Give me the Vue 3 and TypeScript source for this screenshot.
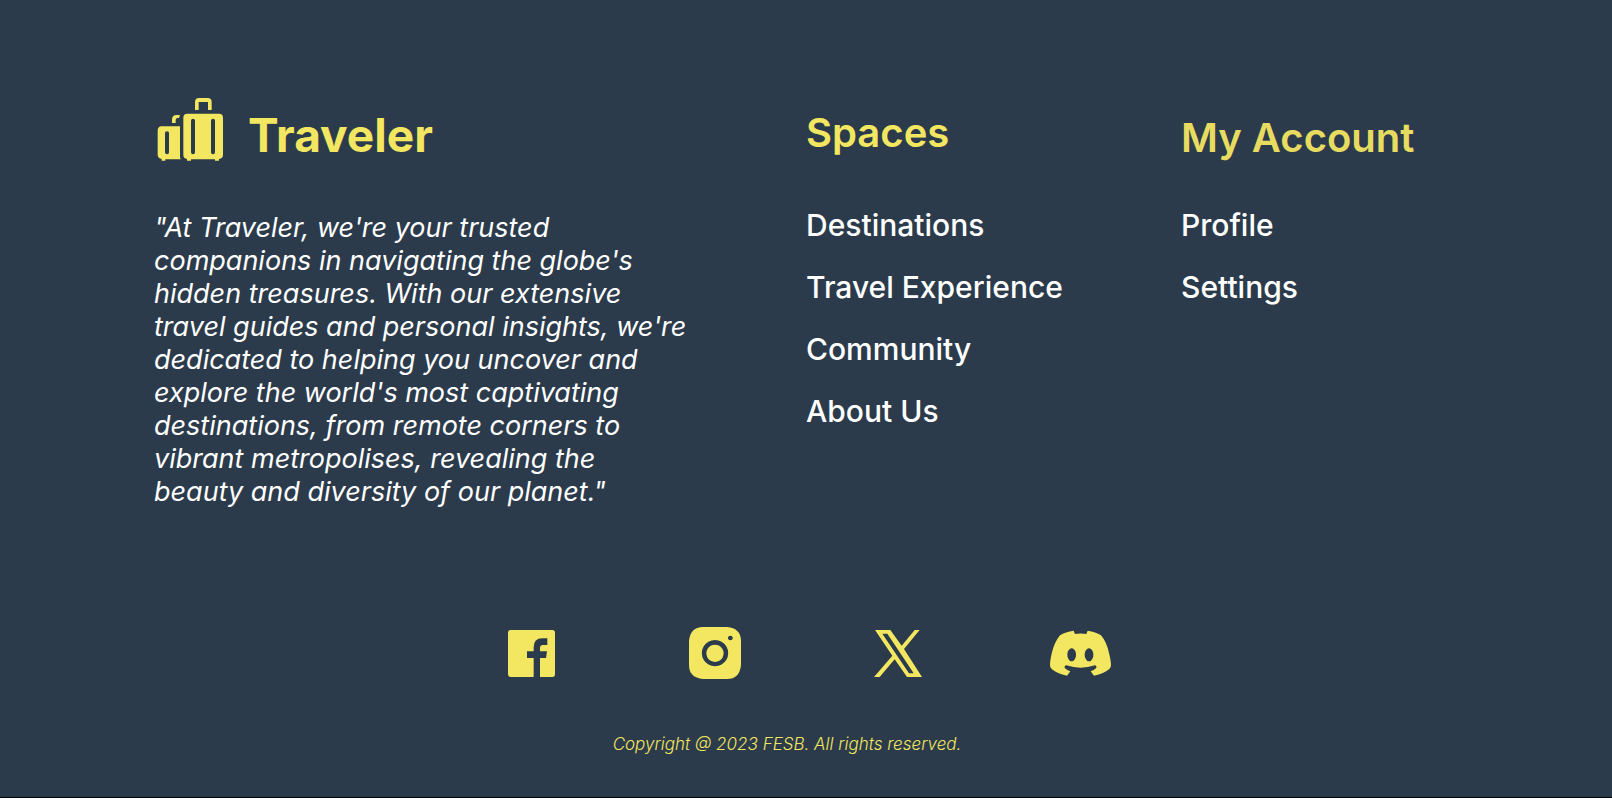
<script setup lang="ts">
interface Column {
  id: string
  title: string
  links: string[]
}

const columns: Column[] = [
  { id: 'spaces', title: 'Spaces', links: ['Destinations', 'Travel Experience', 'Community', 'About Us'] },
  { id: 'account', title: 'My Account', links: ['Profile', 'Settings'] },
]
</script>

<template>
  <footer class="footer">
    <div class="top">
      <section class="about">
        <a class="brand" href="#">
          <svg class="logo" viewBox="42 51 210 195" aria-hidden="true">
            <path d="M165 90V66q0-12 12-12h26q12 0 12 12v24h-11V66h-28v24z" />
            <path d="M96 129v-10q0-14 14-14h10l-3 9h-4q-6 0-6 6v9z" />
            <path
              fill-rule="evenodd"
              d="M63 139h57v93l2 6h-46v4H65v-5q-12-3-12-13v-72q0-11 10-13zM75 159v58q0 6 6 6t6-6v-58q0-5-6-5t-6 5z"
            />
            <path
              fill-rule="evenodd"
              d="M142 101h95q12 0 12 12v112q0 10-12 12v5h-12v-4h-72v4h-12v-5q-11-2-11-12V113q0-12 12-12zM153 122v95q0 6 6 6t6-6v-95q0-6-6-6t-6 6zM213 122v95q0 6 6 6t6-6v-95q0-6-6-6t-6 6z"
            />
          </svg>
          <span class="name">Traveler</span>
        </a>
        <p class="quote">
          "At Traveler, we're your trusted companions in navigating the globe's hidden treasures. With our
          extensive travel guides and personal insights, we're dedicated to helping you uncover and explore the
          world's most captivating destinations, from remote corners to vibrant metropolises, revealing the
          beauty and diversity of our planet."
        </p>
      </section>
      <nav v-for="column in columns" :key="column.id" :class="['column', column.id]" :aria-labelledby="column.id">
        <h2 :id="column.id" class="heading">{{ column.title }}</h2>
        <ul class="links">
          <li v-for="link in column.links" :key="link"><a href="#">{{ link }}</a></li>
        </ul>
      </nav>
    </div>

    <div class="social">
      <a href="#" aria-label="Facebook">
        <svg width="47" height="47" viewBox="0 0 141 141">
          <path
            d="M8 0h125q8 0 8 8v125q0 8-8 8H96V84h18l3-20H96V54q0-9 9-9h13V25h-15q-26 0-26 27v12H57v20h20v57H8q-8 0-8-8V8q0-8 8-8z"
          />
        </svg>
      </a>
      <a href="#" aria-label="Instagram">
        <svg width="52" height="52" viewBox="0 0 156 156">
          <path
            fill-rule="evenodd"
            d="M42 0h72q42 4 42 42v72q-4 42-42 42H42Q0 152 0 114V42Q4 0 42 0zM78 39a39.500 39.500 0 1 0 .1 0zM78 53a26 26 0 1 1-.1 0zM124 26a7 7 0 1 0 .1 0z"
          />
        </svg>
      </a>
      <a href="#" aria-label="X">
        <svg width="48" height="47" viewBox="0 0 144 141">
          <path
            fill-rule="evenodd"
            d="M3 0h46l34 47L122 0h15L90 57l54 84H99L62 88 17 141H0l55-64zM25 11l80 119h14L40 11z"
          />
        </svg>
      </a>
      <a href="#" aria-label="Discord">
        <svg width="61" height="46" viewBox="0 0 183 138">
          <path
            fill-rule="evenodd"
            d="M71 2L75 12Q92 9 109 12L113 2Q137 5 153 16Q170 36 177 69Q183 93 183 106Q183 113 178 117Q162 131 132 137L122 124Q132 121 138 115Q142 108 135 106Q92 120 49 106Q41 108 45 115Q51 121 61 124L51 137Q21 131 5 117Q0 113 0 106Q0 91 6 67Q13 37 30 16Q46 5 71 2zM65 55a13 19.500 0 1 0 .1 0zM117 55a13 19.500 0 1 0 .1 0z"
          />
        </svg>
      </a>
    </div>

    <p class="copyright">Copyright @ 2023 FESB. All rights reserved.</p>
  </footer>
</template>

<style>
body {
  margin: 0;
  background: #2b3b4b;
}
</style>

<style scoped>
.footer {
  box-sizing: border-box;
  display: flex;
  flex-direction: column;
  min-height: 100vh;
  padding: 95px 154px 40px;
  border-bottom: 1px solid #000;
  background: #2b3b4b;
  color: #fff;
  font-family: Inter, "Liberation Sans", sans-serif;
}

a {
  color: inherit;
  text-decoration: none;
}

.top {
  display: grid;
  grid-template-columns: 652fr 375fr 277fr;
}

.brand {
  display: flex;
  align-items: center;
  gap: 24px;
  color: #f3e660;
}

.logo {
  width: 70px;
  height: 65px;
  fill: currentColor;
}

.name {
  padding-top: 12px;
  font-size: 46px;
  font-weight: 700;
  line-height: 56px;
}

.quote {
  max-width: 536px;
  margin: 48px 0 0;
  font-size: 27px;
  font-style: italic;
  font-weight: 400;
  line-height: 33px;
}

.column {
  padding-top: 14px;
}

.heading {
  margin: 0;
  color: #f3e660;
  font-size: 40px;
  font-weight: 600;
  line-height: 48px;
}

.account .heading {
  padding-top: 5px;
  margin-bottom: -5px;
  color: #e8dc60;
}

.links {
  display: grid;
  gap: 26px;
  margin: 50px 0 0;
  padding: 0;
  list-style: none;
  font-size: 30px;
  font-weight: 500;
  line-height: 36px;
}

.social {
  display: grid;
  grid-template-columns: repeat(4, 183px);
  justify-content: center;
  place-items: center;
  margin-top: 119px;
  color: #f3e660;
}

.social svg {
  display: block;
  fill: currentColor;
}

.copyright {
  margin: 55px 38px 0 0;
  color: #f3e660;
  font-size: 17px;
  font-style: italic;
  font-weight: 300;
  line-height: 20px;
  text-align: center;
}
</style>
